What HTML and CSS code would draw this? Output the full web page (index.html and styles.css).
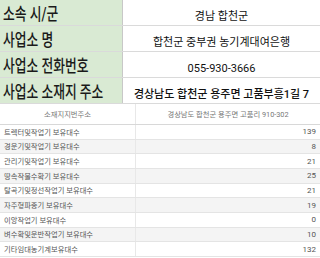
FILE: index.html
```html
<!DOCTYPE html>
<html lang="ko">
<head>
<meta charset="utf-8">
<link rel="stylesheet" href="styles.css">
</head>
<body>
<div class="info">
  <div class="row">
    <div class="label"><span>소속 시/군</span></div>
    <div class="value">경남 합천군</div>
  </div>
  <div class="row">
    <div class="label"><span>사업소 명</span></div>
    <div class="value">합천군 중부권 농기계대여은행</div>
  </div>
  <div class="row">
    <div class="label"><span>사업소 전화번호</span></div>
    <div class="value">055-930-3666</div>
  </div>
  <div class="row">
    <div class="label"><span>사업소 소재지 주소</span></div>
    <div class="value addr">경상남도 합천군 용주면 고품부흥1길 7</div>
  </div>
</div>
<div class="stock">
  <div class="srow head">
    <div class="k">소재지지번주소</div>
    <div class="v">경상남도 합천군 용주면 고품리 910-302</div>
  </div>
  <div class="srow"><div class="k">트렉터및작업기 보유대수</div><div class="v">139</div></div>
  <div class="srow alt"><div class="k">경운기및작업기 보유대수</div><div class="v">8</div></div>
  <div class="srow"><div class="k">관리기및작업기 보유대수</div><div class="v">21</div></div>
  <div class="srow alt"><div class="k">땅속작물수확기 보유대수</div><div class="v">25</div></div>
  <div class="srow"><div class="k">탈곡기및정선작업기 보유대수</div><div class="v">21</div></div>
  <div class="srow alt"><div class="k">자주형파종기 보유대수</div><div class="v">19</div></div>
  <div class="srow"><div class="k">이앙작업기 보유대수</div><div class="v">0</div></div>
  <div class="srow alt"><div class="k">벼수확및운반작업기 보유대수</div><div class="v">10</div></div>
  <div class="srow"><div class="k">기타임대농기계보유대수</div><div class="v">132</div></div>
</div>
</body>
</html>
```
FILE: styles.css
```css
* { box-sizing: border-box; }
html, body {
  margin: 0;
  padding: 0;
  background: #ffffff;
}
body {
  width: 320px;
  height: 258px;
  overflow: hidden;
  font-family: Roboto, "Noto Sans CJK KR", sans-serif;
  color: #222;
}
.info {
  display: flex;
  flex-direction: column;
}
.row {
  display: grid;
  grid-template-columns: 123px 1fr;
  height: 26px;
  border-bottom: 1px solid #dadada;
}
.label {
  background: #d9ead3;
  border-right: 1px solid #c8c8c8;
  display: flex;
  align-items: center;
  padding-left: 3px;
  overflow: visible;
  white-space: nowrap;
}
.label span {
  display: inline-block;
  font-size: 17.5px;
  font-weight: 500;
  color: #1a1a1a;
  transform: scaleX(0.73);
  transform-origin: left center;
}
.value {
  display: flex;
  align-items: flex-end;
  justify-content: center;
  padding-bottom: 2px;
  font-size: 11px;
  color: #111;
  white-space: nowrap;
}
.value.addr {
  font-weight: 500;
}
.stock {
  display: flex;
  flex-direction: column;
  font-size: 7.3px;
  color: #555;
}
.srow {
  display: grid;
  grid-template-columns: 136px 1fr;
  height: 14.67px;
  border-bottom: 1px solid #e4e4e4;
  align-items: center;
}
.srow.head {
  height: 21px;
  border-bottom: 1px solid #d8d8d8;
}
.srow.alt {
  background: #f4f4f4;
}
.k {
  height: 100%;
  display: flex;
  align-items: center;
  padding-left: 4px;
  border-right: 1px solid #e8e8e8;
  white-space: nowrap;
}
.v {
  text-align: right;
  padding-right: 4px;
  font-size: 8px;
}
.head .k {
  justify-content: center;
  padding-left: 0;
  color: #777;
}
.head .v {
  text-align: center;
  padding-right: 0;
  font-size: 7.3px;
  color: #777;
}
```
